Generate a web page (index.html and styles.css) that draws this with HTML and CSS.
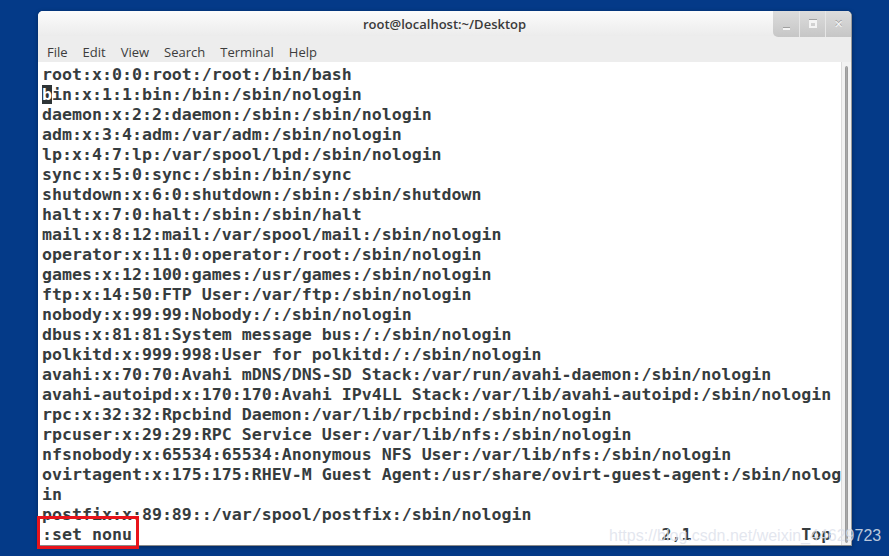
FILE: index.html
```html
<!DOCTYPE html>
<html lang="en">
<head>
    <meta charset="UTF-8">
    <meta name="viewport" content="width=device-width, initial-scale=1.0">
    <title>root@localhost:~/Desktop</title>
    <link rel="stylesheet" href="styles.css">
</head>
<body>
    <div class="window">
        <div class="titlebar">
            <span class="title">root@localhost:~/Desktop</span>
            <div class="controls">
                <span class="ctl ctl-min"><span class="dash"></span></span>
                <span class="ctl ctl-max"><span class="box"></span></span>
                <span class="ctl ctl-close">&#x2715;</span>
            </div>
        </div>

        <div class="menubar">
            <span>File</span>
            <span>Edit</span>
            <span>View</span>
            <span>Search</span>
            <span>Terminal</span>
            <span>Help</span>
        </div>

        <div class="content">
            <pre class="screen">root:x:0:0:root:/root:/bin/bash
<span class="cursor">b</span>in:x:1:1:bin:/bin:/sbin/nologin
daemon:x:2:2:daemon:/sbin:/sbin/nologin
adm:x:3:4:adm:/var/adm:/sbin/nologin
lp:x:4:7:lp:/var/spool/lpd:/sbin/nologin
sync:x:5:0:sync:/sbin:/bin/sync
shutdown:x:6:0:shutdown:/sbin:/sbin/shutdown
halt:x:7:0:halt:/sbin:/sbin/halt
mail:x:8:12:mail:/var/spool/mail:/sbin/nologin
operator:x:11:0:operator:/root:/sbin/nologin
games:x:12:100:games:/usr/games:/sbin/nologin
ftp:x:14:50:FTP User:/var/ftp:/sbin/nologin
nobody:x:99:99:Nobody:/:/sbin/nologin
dbus:x:81:81:System message bus:/:/sbin/nologin
polkitd:x:999:998:User for polkitd:/:/sbin/nologin
avahi:x:70:70:Avahi mDNS/DNS-SD Stack:/var/run/avahi-daemon:/sbin/nologin
avahi-autoipd:x:170:170:Avahi IPv4LL Stack:/var/lib/avahi-autoipd:/sbin/nologin
rpc:x:32:32:Rpcbind Daemon:/var/lib/rpcbind:/sbin/nologin
rpcuser:x:29:29:RPC Service User:/var/lib/nfs:/sbin/nologin
nfsnobody:x:65534:65534:Anonymous NFS User:/var/lib/nfs:/sbin/nologin
ovirtagent:x:175:175:RHEV-M Guest Agent:/usr/share/ovirt-guest-agent:/sbin/nolog
in
postfix:x:89:89::/var/spool/postfix:/sbin/nologin
<span class="cmd">:set nonu</span>                                                     2,1           Top</pre>
            <div class="scrollbar">
                <div class="thumb"></div>
            </div>
        </div>
    </div>

    <div class="watermark">https://blog.csdn.net/weixin_44629723</div>
</body>
</html>
```

FILE: styles.css
```css
* {
    box-sizing: border-box;
    margin: 0;
    padding: 0;
}

body {
    width: 889px;
    height: 556px;
    overflow: hidden;
    background-color: #043a88;
    padding: 11px 37px 10px 38px;
    position: relative;
}

.window {
    width: 814px;
    height: 535px;
    display: flex;
    flex-direction: column;
    background-color: #ededed;
    border-radius: 5px 5px 0 0;
    border-right: 1px solid #9a9a9a;
    border-bottom: 1px solid #8a8a8a;
    box-shadow: 0 1px 4px rgba(0, 0, 0, 0.35);
}

/* title bar */
.titlebar {
    height: 26px;
    position: relative;
    display: flex;
    align-items: center;
    justify-content: center;
    padding-top: 2px;
    background: linear-gradient(#fbfbfb, #ececec);
    border-radius: 5px 5px 0 0;
}

.title {
    font-family: 'Open Sans', sans-serif;
    font-size: 13px;
    font-weight: 600;
    color: #3a3a3a;
}

.controls {
    position: absolute;
    top: 0;
    right: 0;
    height: 26px;
    display: flex;
    border-radius: 0 5px 0 5px;
    overflow: hidden;
    background: linear-gradient(#dcdcdc, #c6c6c6);
}

.ctl {
    width: 26px;
    height: 26px;
    display: flex;
    align-items: center;
    justify-content: center;
    border-left: 1px solid #e6e6e6;
    color: #f4f4f4;
    font-family: 'DejaVu Sans', sans-serif;
    font-size: 11px;
    font-weight: bold;
    text-shadow: 0 -1px 0 #9a9a9a;
}

.ctl:first-child {
    border-left: none;
}

.ctl-min .dash {
    width: 7px;
    height: 2px;
    margin-top: 9px;
    background-color: #f4f4f4;
    box-shadow: 0 -1px 0 #a0a0a0;
}

.ctl-max .box {
    width: 8px;
    height: 8px;
    border: 2px solid #f4f4f4;
    border-top-width: 3px;
    box-shadow: 0 -1px 0 #a0a0a0;
}

/* menu bar */
.menubar {
    height: 27px;
    display: flex;
    align-items: center;
    gap: 15px;
    padding: 6px 0 0 9px;
    background-color: #ededed;
    font-family: 'Open Sans', sans-serif;
    font-size: 13px;
    color: #3c3c3c;
}

/* terminal area */
.content {
    flex: 1;
    display: flex;
    background-color: white;
}

.screen {
    flex: 1;
    padding: 3px 0 0 4px;
    font-family: 'DejaVu Sans Mono', monospace;
    font-size: 16.6px;
    font-weight: bold;
    line-height: 20px;
    color: #363c3e;
    white-space: pre;
}

.cursor {
    background-color: #2e3436;
    color: white;
}

.cmd {
    position: relative;
}

.cmd::after {
    content: '';
    position: absolute;
    left: -5px;
    top: -9px;
    right: -7px;
    bottom: -5px;
    border: 3px solid #e8141b;
}

.scrollbar {
    width: 13px;
    padding: 4px 3px 2px 3px;
    background-color: #f2f2f2;
    border-left: 1px solid #dcdcdc;
}

.thumb {
    height: 100%;
    background-color: #a9a9a9;
    border: 1px solid #9c9c9c;
    border-radius: 3px;
}

.watermark {
    position: absolute;
    left: 609px;
    top: 527px;
    font-family: 'Liberation Sans', Arial, sans-serif;
    font-size: 16px;
    color: rgba(222, 226, 236, 0.85);
}
```
